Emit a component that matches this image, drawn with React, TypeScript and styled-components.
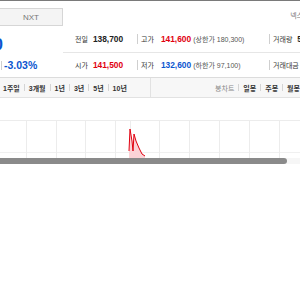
import React from "react";
import styled, { createGlobalStyle } from "styled-components";

const Global = createGlobalStyle`
  html, body { margin: 0; padding: 0; background: #fff; }
  body { font-family: "Liberation Sans", "Noto Sans CJK KR", sans-serif; overflow: hidden; }
`;

const RED = "#e1000f";
const BLUE = "#0b56cf";

const Page = styled.div`
  width: 300px;
  border-top: 1px solid #7a7a7a;
`;

const Header = styled.div`
  display: grid;
  grid-template-columns: 63px 1fr;
  height: 76px;
`;

const LeftCol = styled.div`
  display: flex;
  flex-direction: column;
`;

const NxtTab = styled.div`
  margin-top: 7px;
  height: 16px;
  background: #f4f4f4;
  border: 1px solid #d6d6d6;
  border-left: none;
  display: flex;
  align-items: center;
  justify-content: center;
  font-size: 8px;
  color: #777;
`;

const PriceWrap = styled.div`
  width: 3px;
  height: 18px;
  margin-top: 10px;
  display: flex;
  justify-content: flex-end;
  align-items: center;
`;

const Price = styled.span`
  font-size: 17px;
  font-weight: bold;
  color: ${BLUE};
  white-space: nowrap;
`;

const ChangeRow = styled.div`
  margin-top: 5px;
  display: flex;
  align-items: center;
  gap: 2px;
  padding-left: 1px;
`;

const ChangeText = styled.span`
  font-size: 10.5px;
  font-weight: bold;
  color: ${BLUE};
  white-space: nowrap;
`;

const Divider = styled.span<{ $h?: number }>`
  display: inline-block;
  width: 1px;
  height: ${(p) => p.$h ?? 10}px;
  background: #cfcfcf;
  flex: none;
`;

const RightCol = styled.div`
  display: flex;
  flex-direction: column;
`;

const TopLabel = styled.div`
  height: 24px;
  display: flex;
  align-items: center;
  justify-content: flex-end;
  padding-top: 3px;
  box-sizing: border-box;
  margin-right: -25px;
  font-size: 7px;
  color: #777;
  white-space: nowrap;
`;

const InfoRow = styled.div<{ $line?: boolean }>`
  height: ${(p) => (p.$line ? 27 : 23)}px;
  display: flex;
  align-items: center;
  padding-left: 12px;
  border-bottom: ${(p) => (p.$line ? "1px solid #e6e6e6" : "none")};
  white-space: nowrap;
  overflow: hidden;
`;

const Cell = styled.div<{ $w?: number }>`
  display: flex;
  align-items: center;
  width: ${(p) => (p.$w ? `${p.$w}px` : "auto")};
  flex: none;
`;

const Label = styled.span<{ $gap?: number }>`
  font-size: 7px;
  color: #333;
  margin-right: ${(p) => p.$gap ?? 5}px;
`;

const Value = styled.span<{ $c?: string }>`
  font-size: 8.4px;
  font-weight: bold;
  color: ${(p) => p.$c ?? "#222"};
`;

const Sub = styled.span`
  font-size: 7px;
  color: #555;
  margin-left: 2px;
`;

const CellSep = styled(Divider)`
  margin: 0 3px 0 0;
`;

const TabBar = styled.div`
  display: grid;
  grid-template-columns: 150px 150px;
  height: 19px;
  background: #f7f7f7;
  border-top: 1px solid #dcdcdc;
  border-bottom: 1px solid #e2e2e2;
`;

const TabGroup = styled.div<{ $right?: boolean }>`
  display: flex;
  align-items: center;
  justify-content: ${(p) => (p.$right ? "flex-end" : "flex-start")};
  padding-left: ${(p) => (p.$right ? 0 : 3)}px;
  border-left: ${(p) => (p.$right ? "1px solid #e2e2e2" : "none")};
  white-space: nowrap;
  overflow: hidden;
`;

const Tab = styled.span<{ $muted?: boolean }>`
  font-size: 7px;
  font-weight: ${(p) => (p.$muted ? "normal" : "bold")};
  color: ${(p) => (p.$muted ? "#8a8a8a" : "#333")};
`;

const TabSep = styled(Divider)`
  height: 7px;
  margin: 0 4px;
  background: #d4d4d4;
`;

const ChartArea = styled.div`
  height: 60px;
`;

const Scroll = styled.div`
  height: 6px;
  background: #f6f6f6;
`;

const Thumb = styled.div`
  width: 287px;
  height: 6px;
  background: #8a8a8a;
  border-radius: 0 3px 3px 0;
`;

const gridX = [26, 56, 85, 115, 130, 159, 189, 219, 249, 279];

function Chart() {
  const pts = "129,53 130,31 132,43 133,53 134,36 136,43 139,50 142,56 145,58";
  return (
    <svg width={300} height={60} viewBox="0 0 300 60">
      <line x1={0} y1={22.5} x2={300} y2={22.5} stroke="#ececec" />
      <line x1={0} y1={54.5} x2={300} y2={54.5} stroke="#f0f0f0" />
      {gridX.map((x) => (
        <line key={x} x1={x + 0.5} y1={22} x2={x + 0.5} y2={60} stroke="#ececec" />
      ))}
      <polygon points={`129,60 ${pts} 145,60`} fill="#fbd3d7" />
      <polyline points={pts} fill="none" stroke={RED} strokeWidth={1} />
    </svg>
  );
}

export default function App() {
  return (
    <>
      <Global />
      <Page>
        <Header>
          <LeftCol>
            <NxtTab>NXT</NxtTab>
            <PriceWrap>
              <Price>134,200</Price>
            </PriceWrap>
            <ChangeRow>
              <Divider $h={9} />
              <ChangeText>-3.03%</ChangeText>
            </ChangeRow>
          </LeftCol>
          <RightCol>
            <TopLabel>넥스트레이드</TopLabel>
            <InfoRow $line>
              <Cell $w={62}>
                <Label>전일</Label>
                <Value>138,700</Value>
              </Cell>
              <CellSep />
              <Cell $w={128}>
                <Label $gap={7}>고가</Label>
                <Value $c={RED}>141,600</Value>
                <Sub>(상한가 180,300)</Sub>
              </Cell>
              <CellSep />
              <Cell>
                <Label>거래량</Label>
                <Value>5</Value>
              </Cell>
            </InfoRow>
            <InfoRow>
              <Cell $w={62}>
                <Label>시가</Label>
                <Value $c={RED}>141,500</Value>
              </Cell>
              <CellSep />
              <Cell $w={128}>
                <Label $gap={7}>저가</Label>
                <Value $c={BLUE}>132,600</Value>
                <Sub>(하한가 97,100)</Sub>
              </Cell>
              <CellSep />
              <Cell>
                <Label>거래대금</Label>
              </Cell>
            </InfoRow>
          </RightCol>
        </Header>
        <TabBar>
          <TabGroup>
            <Tab>1주일</Tab>
            <TabSep />
            <Tab>3개월</Tab>
            <TabSep />
            <Tab>1년</Tab>
            <TabSep />
            <Tab>3년</Tab>
            <TabSep />
            <Tab>5년</Tab>
            <TabSep />
            <Tab>10년</Tab>
          </TabGroup>
          <TabGroup $right>
            <Tab $muted>봉차트</Tab>
            <TabSep />
            <Tab>일봉</Tab>
            <TabSep />
            <Tab>주봉</Tab>
            <TabSep />
            <Tab>월봉</Tab>
          </TabGroup>
        </TabBar>
        <ChartArea>
          <Chart />
        </ChartArea>
        <Scroll>
          <Thumb />
        </Scroll>
      </Page>
    </>
  );
}
